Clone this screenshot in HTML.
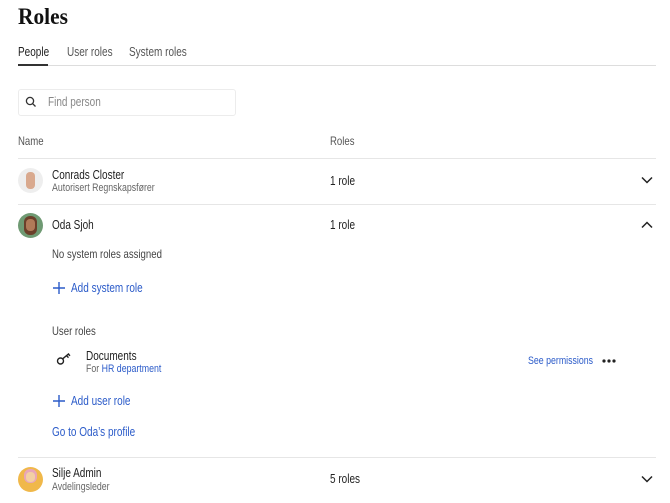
<!DOCTYPE html>
<html><head><style>
body{margin:0;width:670px;height:503px;background:#fff;font-family:"Liberation Sans",sans-serif;color:#222;position:relative;overflow:hidden}
.a{position:absolute;white-space:nowrap}
div.a{transform:scaleX(.8);transform-origin:0 0}
div.a.nb{transform:none}
h1{position:absolute;left:18px;top:4px;margin:0;font-family:"Liberation Serif",serif;font-size:23px;font-weight:bold;color:#111;transform:scaleX(.93);transform-origin:0 0}
.t{font-size:12.5px;color:#555;top:45px}
.l{position:absolute;height:1px;background:#e6e6e6;left:18px;width:638px}
.n{font-size:12.5px;color:#222}
.s{font-size:11px;color:#666}
.b{color:#2b5bc9;font-size:12.5px}
.av{position:absolute;left:18px;width:25px;height:25px;border-radius:50%;overflow:hidden}
</style></head><body>
<h1>Roles</h1>
<div class="a t" style="left:18px;color:#222">People</div>
<div class="a t" style="left:67px">User roles</div>
<div class="a t" style="left:129px">System roles</div>
<div class="l" style="top:65px;background:#ddd"></div>
<div class="a nb" style="left:18px;top:64px;width:30px;height:2px;background:#333"></div>
<div class="a nb" style="left:18px;top:89px;width:216px;height:25px;border:1px solid #ececec;border-radius:3px"></div>
<svg class="a" style="left:25px;top:96px" width="12" height="12" viewBox="0 0 12 12"><circle cx="5" cy="5" r="3.6" fill="none" stroke="#333" stroke-width="1.3"/><path d="M7.7 7.7L10.5 10.5" stroke="#333" stroke-width="1.3"/></svg>
<div class="a" style="left:48px;top:95px;font-size:12.5px;color:#888">Find person</div>
<div class="a" style="left:18px;top:134px;font-size:12px;color:#555">Name</div>
<div class="a" style="left:330px;top:134px;font-size:12px;color:#555">Roles</div>
<div class="l" style="top:158px"></div>
<div class="av" style="top:168px;background:#eee"><div style="position:absolute;left:8px;top:4px;width:9px;height:17px;border-radius:4px;background:#d9a98e"></div></div>
<div class="a n" style="left:52px;top:168px">Conrads Closter</div>
<div class="a s" style="left:52px;top:182px">Autorisert Regnskapsfører</div>
<div class="a n" style="left:330px;top:174px">1 role</div>
<svg class="a" style="left:641px;top:176px" width="12" height="8"><path d="M1 1.5L6 6.5L11 1.5" fill="none" stroke="#222" stroke-width="1.5"/></svg>
<div class="l" style="top:204px"></div>
<div class="av" style="top:213px;background:#6f9a73"><div style="position:absolute;left:6px;top:3px;width:13px;height:19px;border-radius:6px;background:#6b3f2a"></div><div style="position:absolute;left:8px;top:6px;width:9px;height:12px;border-radius:4px;background:#b07a58"></div></div>
<div class="a n" style="left:52px;top:218px">Oda Sjoh</div>
<div class="a n" style="left:330px;top:218px">1 role</div>
<svg class="a" style="left:641px;top:221px" width="12" height="8"><path d="M1 6.5L6 1.5L11 6.5" fill="none" stroke="#222" stroke-width="1.5"/></svg>
<div class="a" style="left:52px;top:247px;font-size:12px;color:#444">No system roles assigned</div>
<svg class="a" style="left:53px;top:282px" width="12" height="12"><path d="M6 0V12M0 6H12" stroke="#2b5bc9" stroke-width="1.4"/></svg>
<div class="a b" style="left:71px;top:281px">Add system role</div>
<div class="a" style="left:52px;top:324px;font-size:12px;color:#444">User roles</div>
<svg class="a" style="left:56px;top:352px" width="16" height="14" viewBox="0 0 16 14"><circle cx="4.5" cy="9" r="3" fill="none" stroke="#222" stroke-width="1.4"/><path d="M6.7 6.8L13 1.5M10.5 3.6L12.5 5.6M12.3 2.1L14 3.8" stroke="#222" stroke-width="1.4" fill="none"/></svg>
<div class="a n" style="left:86px;top:349px">Documents</div>
<div class="a s" style="left:86px;top:363px">For <span style="color:#2b5bc9">HR department</span></div>
<div class="a" style="left:528px;top:355px;font-size:11px;color:#2b5bc9">See permissions</div>
<svg class="a" style="left:602px;top:359px" width="14" height="4"><circle cx="2" cy="2" r="1.6" fill="#222"/><circle cx="7" cy="2" r="1.6" fill="#222"/><circle cx="12" cy="2" r="1.6" fill="#222"/></svg>
<svg class="a" style="left:53px;top:395px" width="12" height="12"><path d="M6 0V12M0 6H12" stroke="#2b5bc9" stroke-width="1.4"/></svg>
<div class="a b" style="left:71px;top:394px">Add user role</div>
<div class="a b" style="left:52px;top:425px">Go to Oda’s profile</div>
<div class="l" style="top:457px"></div>
<div class="av" style="top:467px;background:#f0b84a"><div style="position:absolute;left:6px;top:2px;width:13px;height:14px;border-radius:6px;background:#e9a6b8"></div><div style="position:absolute;left:8px;top:5px;width:9px;height:10px;border-radius:4px;background:#f3cfa4"></div></div>
<div class="a n" style="left:52px;top:466px">Silje Admin</div>
<div class="a s" style="left:52px;top:481px">Avdelingsleder</div>
<div class="a n" style="left:330px;top:472px">5 roles</div>
<svg class="a" style="left:641px;top:475px" width="12" height="8"><path d="M1 1.5L6 6.5L11 1.5" fill="none" stroke="#222" stroke-width="1.5"/></svg>
</body></html>
